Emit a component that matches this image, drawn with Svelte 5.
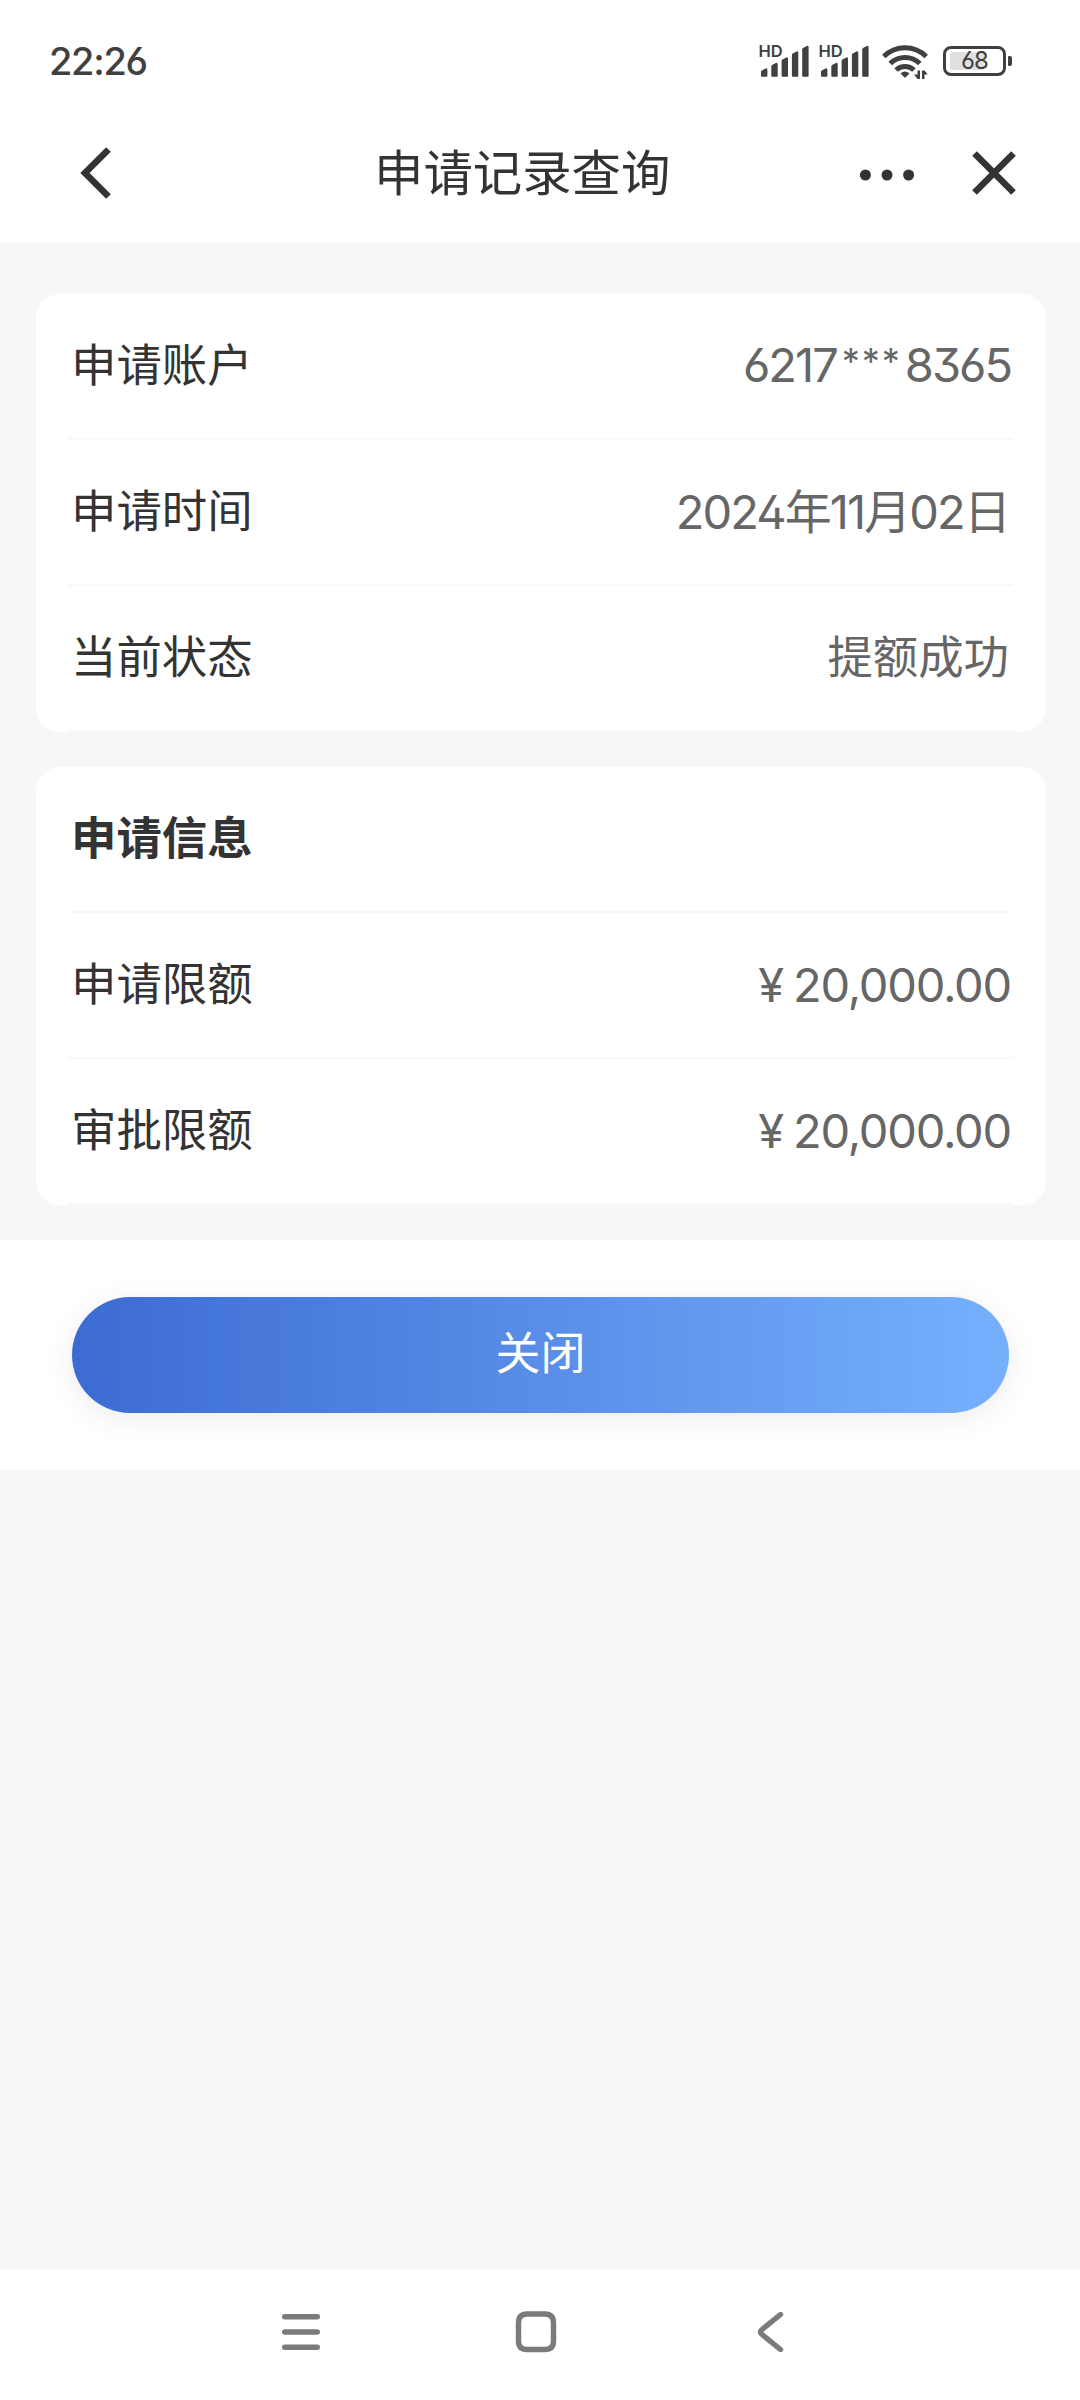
<script>
  const time = '22:26';
  const battery = 68;
  const title = '申请记录查询';

  // Height of each signal bar, left to right
  const bars = [8, 13.5, 19, 25, 30.5];

  const account = [
    { label: '申请账户', value: '6217***8365', kind: 'number' },
    { label: '申请时间', value: '2024年11月02日', kind: 'date' },
    { label: '当前状态', value: '提额成功', kind: 'text' }
  ];

  const limits = [
    { label: '申请限额', value: '¥ 20,000.00', kind: 'money' },
    { label: '审批限额', value: '¥ 20,000.00', kind: 'money' }
  ];

  // Split off the masked part of an account number so it can be styled
  function splitMask(value) {
    return value.split(/(\*+)/);
  }
</script>

<div class="screen">
  <div class="status-bar">
    <span class="time">{time}</span>
    <div class="status-icons">
      {#each [0, 1] as sim (sim)}
        <svg class="signal" width="50" height="36" viewBox="0 0 50 36">
          <text class="hd" x="-1.5" y="13.7">HD</text>
          {#each bars as h, i}
            <path d="M{1 + i * 10.3} 33V{37 - h}q0-.8.8-1.4l3.8-2.2q1.800-.6 1.800 1.400V33q0 .8-.8.8h-4.600q-1 0-1-.8z" />
          {/each}
        </svg>
      {/each}
      <svg class="wifi" width="46" height="38" viewBox="0 0 46 38">
        <g fill="none" stroke-width="5">
          <path d="M1.8 12.5a30 30 0 0 1 42.4 0" />
          <path d="M8.2 19.5a21 21 0 0 1 29.6 0" />
          <path d="M14 26a13 13 0 0 1 18 0" />
        </g>
        <path d="M18.5 29.5q4.500-4 9 0l-3.500 3.500q-1 1-2 0z" />
        <path d="M35.5 26.5h2.500v8.500h-2.500q-1.500-2-3.500-4.500h3.500zM40 26.500h2.500q2 2 3 4H42.500v4.500h-2.500z" />
      </svg>
      <div class="battery">
        <div class="battery-body">
          <div class="battery-fill"></div>
          <span>{battery}</span>
        </div>
        <div class="battery-tip"></div>
      </div>
    </div>
  </div>

  <header>
    <svg class="back" width="32" height="54" viewBox="0 0 32 54">
      <path d="M28.5 3.5L5 27l23.500 23.500" />
    </svg>
    <h1>{title}</h1>
    <svg class="more" width="56" height="12" viewBox="0 0 56 12">
      <circle cx="6.4" cy="6" r="5.5" />
      <circle cx="28" cy="6" r="5.5" />
      <circle cx="49.6" cy="6" r="5.5" />
    </svg>
    <svg class="close" width="46" height="46" viewBox="0 0 46 46">
      <path d="M3.5 3.5l39 39M42.5 3.5l-39 39" />
    </svg>
  </header>

  <main>
    <section class="card">
      {#each account as row}
        <div class="row">
          <span class="label">{row.label}</span>
          <span class="value {row.kind}">
            {#each splitMask(row.value) as part}<span class:mask={part.startsWith('*')}>{part}</span>{/each}
          </span>
        </div>
      {/each}
    </section>

    <section class="card">
      <div class="row">
        <h2 class="label">申请信息</h2>
      </div>
      {#each limits as row}
        <div class="row">
          <span class="label">{row.label}</span>
          <span class="value {row.kind}">{row.value}</span>
        </div>
      {/each}
    </section>
  </main>

  <div class="actions">
    <button type="button">关闭</button>
  </div>

  <nav>
    <svg width="42" height="42" viewBox="0 0 42 42">
      <path d="M4.7 5.7h32.6M4.7 21h32.6M4.7 36.3h32.6" />
    </svg>
    <svg width="42" height="42" viewBox="0 0 42 42">
      <path d="M12 3h18Q38.5 3 38.5 12v18Q38.5 38.5 30 38.5H12Q3.5 38.5 3.5 30V12Q3.5 3 12 3z" />
    </svg>
    <svg width="42" height="42" viewBox="0 0 42 42">
      <path d="M30.5 3.5L11.5 19Q9.300 21 11.5 23L30.5 38.5" />
    </svg>
  </nav>
</div>

<style>
  :global(body) {
    background: #f7f7f7;
  }

  .screen {
    display: flex;
    flex-direction: column;
    width: 1080px;
    height: 2400px;
    background: #f7f7f7;
    color: #333;
    font-family: Inter, 'Noto Sans CJK SC', sans-serif;
    overflow: hidden;
  }

  .status-bar {
    display: flex;
    align-items: flex-start;
    justify-content: space-between;
    box-sizing: border-box;
    height: 104px;
    padding: 43px 68px 0 49px;
    background: #fff;
  }

  .time {
    margin-top: -1px;
    font-size: 38px;
    font-weight: 500;
    line-height: 38px;
    letter-spacing: -1.3px;
    color: #404040;
    font-feature-settings: 'ss01';
  }

  .status-icons {
    display: flex;
    align-items: flex-start;
  }

  .status-icons svg {
    fill: #404040;
    stroke: none;
  }

  .signal {
    margin-right: 10px;
    overflow: visible;
  }

  .hd {
    font-size: 16.5px;
    font-weight: 600;
  }

  .wifi {
    margin: 1px 15px 0 2px;
    overflow: visible;
  }

  .wifi g {
    stroke: #404040;
  }

  .battery {
    display: flex;
    align-items: center;
    gap: 2px;
    margin-top: 3px;
  }

  .battery-body {
    position: relative;
    display: flex;
    align-items: center;
    justify-content: center;
    box-sizing: border-box;
    width: 63px;
    height: 30px;
    border: 3px solid #404040;
    border-radius: 8px;
  }

  .battery-fill {
    position: absolute;
    top: 3px;
    left: 4px;
    width: 34px;
    height: 18px;
    border-radius: 2px;
    background: #e0e0e0;
  }

  .battery-body span {
    position: relative;
    font-size: 24px;
    font-weight: 400;
    line-height: 24px;
    letter-spacing: -1px;
    color: #404040;
    font-feature-settings: 'ss01';
  }

  .battery-tip {
    width: 4px;
    height: 10px;
    border-radius: 1px 2px 2px 1px;
    background: #404040;
  }

  header {
    display: flex;
    align-items: center;
    box-sizing: border-box;
    height: 138px;
    padding: 0 63px 0 80px;
    background: #fff;
  }

  header svg {
    fill: none;
    stroke: #333;
    stroke-width: 6.6;
  }

  h1 {
    flex: 1;
    margin: 0 0 0 262px;
    font-size: 49.4px;
    font-weight: 400;
    line-height: 60px;
  }

  header .more {
    margin: 3px 56px 0 0;
    fill: #333;
    stroke: none;
  }

  main {
    display: flex;
    flex-direction: column;
    gap: 35px;
    padding: 52px 34px 35px 36px;
  }

  .card {
    padding: 0 33px 0 32px;
    border-radius: 24px;
    background: #fff;
  }

  .row {
    display: flex;
    align-items: center;
    justify-content: space-between;
    box-sizing: border-box;
    height: 146px;
    padding: 0 2px 0 3px;
    border-bottom: 2px solid #f8f8f8;
  }

  .label {
    margin: 0;
    font-size: 45.4px;
    font-weight: 400;
    line-height: 60px;
  }

  h2.label {
    font-weight: 700;
  }

  .value {
    font-size: 45.4px;
    line-height: 60px;
    color: #666;
    font-feature-settings: 'ss01', 'cv09';
  }

  .text,
  .date {
    margin-right: 2px;
  }

  .number,
  .date,
  .money {
    font-size: 47px;
    letter-spacing: -1.2px;
  }

  .number {
    margin-top: -2px;
    letter-spacing: -2px;
  }

  .date {
    letter-spacing: -1.9px;
  }

  .money {
    word-spacing: -2px;
  }

  .mask {
    margin: 0 3px 0 5px;
    font-size: 36px;
    line-height: 0;
    letter-spacing: 2px;
    vertical-align: 8px;
  }

  .actions {
    box-sizing: border-box;
    height: 230px;
    padding: 57px 71px 0 72px;
    background: #fff;
  }

  button {
    display: block;
    width: 100%;
    height: 116px;
    padding: 0 0 2px;
    border: none;
    border-radius: 58px;
    background: linear-gradient(90deg, #3c6bd2, #76b0fd);
    box-shadow: 0 6px 30px rgba(0, 0, 0, 0.08);
    color: #fff;
    font: 400 45px/60px Inter, 'Noto Sans CJK SC', sans-serif;
  }

  nav {
    display: flex;
    align-items: center;
    justify-content: center;
    gap: 193px;
    height: 130px;
    margin-top: auto;
    padding: 0 8px 6px 0;
    box-sizing: border-box;
    background: #fff;
  }

  nav svg {
    fill: none;
    stroke: #7b7b7b;
    stroke-width: 5.4;
    stroke-linecap: round;
  }
</style>
